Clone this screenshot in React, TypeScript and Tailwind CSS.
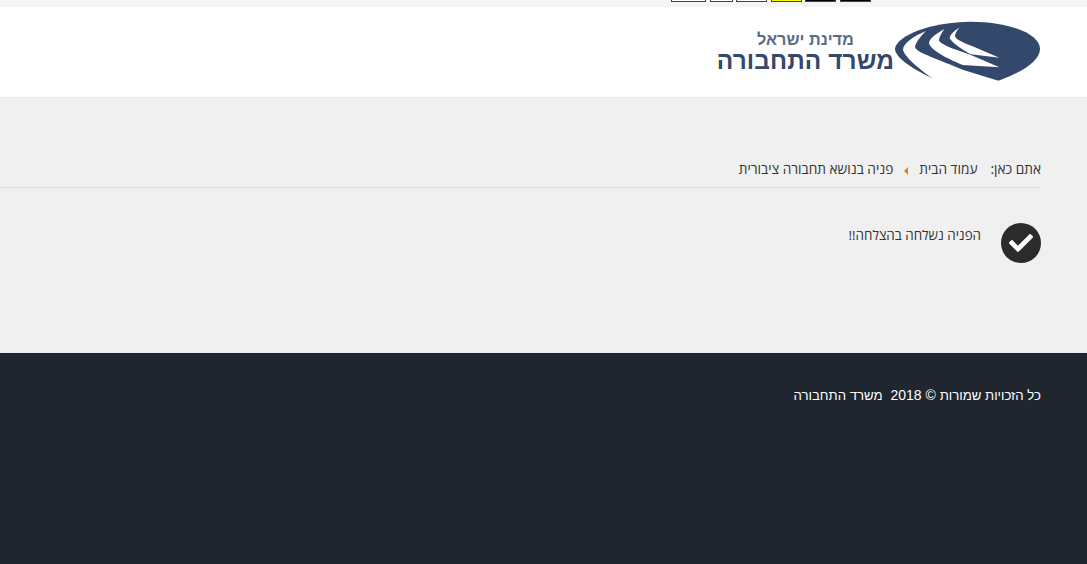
import { FaCheck } from "react-icons/fa";

const topButtons = [
  { id: "a", className: "w-[35px] bg-white" },
  { id: "b", className: "w-[23px] bg-white" },
  { id: "c", className: "w-[31px] bg-white" },
  { id: "d", className: "w-[31px] bg-[#ffff00]" },
  { id: "e", className: "w-[31px] bg-black" },
  { id: "f", className: "w-[31px] bg-black" },
];

function Logo() {
  return (
    <svg width="155" height="70" viewBox="0 0 465 210" aria-label="logo">
      <path
        d="M12 100 C18 62 120 20 240 20 C350 20 447 55 447 102 C447 140 385 175 322 197 L125 190 C80 170 10 130 12 100 Z"
        fill="#34486b"
      />
      <path
        d="M105 48 C70 62 36 85 36 104 C40 125 85 162 125 190 L125 202 L322 202 L322 197 L215 164 C150 135 72 112 72 95 C76 80 90 62 105 48 Z"
        fill="#fff"
      />
      <path
        d="M160 42 C132 58 114 72 114 85 C120 108 180 136 215 150 L325 157 L245 122 C200 106 148 90 144 76 C144 66 152 54 160 42 Z"
        fill="#fff"
      />
      <path
        d="M205 38 C188 48 176 60 176 70 C186 86 216 106 240 118 L325 128 L250 96 C225 86 196 76 192 64 C192 56 198 46 205 38 Z"
        fill="#fff"
      />
    </svg>
  );
}

export default function App() {
  return (
    <div dir="rtl" className="min-h-[564px] flex flex-col bg-[#202630] font-['Liberation_Sans',sans-serif]">
      <div dir="ltr" className="h-[7px] bg-[#f5f5f5] overflow-hidden flex justify-end gap-[3.6px] pr-[216px]">
        {topButtons.map((b) => (
          <div key={b.id} className={`h-[2px] border-x border-b border-[#444] box-border ${b.className}`}></div>
        ))}
      </div>

      <header className="h-[91px] bg-white border-b border-[#eaeaea] pr-[46px] flex items-start">
        <div className="flex items-start -mr-[5px] mt-[8px]">
          <Logo />
          <div className="mr-[-3px] pt-[16px] font-bold leading-none">
            <div className="text-[16.3px] text-[#5c6c88] text-center">מדינת ישראל</div>
            <div className="text-[24.4px] text-[#34486b] mt-[2px] tracking-[0.1px] whitespace-nowrap">משרד התחבורה</div>
          </div>
        </div>
      </header>

      <main className="h-[255px] bg-[#f0f0f0] font-['Open_Sans',sans-serif] text-[#333]">
        <div className="pt-[61px] mr-[46px] border-b border-[#dddddd] h-[90px] flex items-start text-[13.7px] leading-[20px]">
          <span className="ml-[13px]">אתם כאן:</span>
          <span>עמוד הבית</span>
          <span className="mx-[11px] mt-[8px] w-0 h-0 border-y-[4px] border-y-transparent border-r-[4px] border-r-[#e67e22]"></span>
          <span>פניה בנושא תחבורה ציבורית</span>
        </div>
        <div className="mr-[46px] mt-[35px] flex items-start gap-[20px]">
          <div className="w-10 h-10 rounded-full bg-[#2b2b2b] flex items-center justify-center text-white text-[24px]">
            <FaCheck />
          </div>
          <p className="leading-[20px] mt-[2px] text-[13.4px]">הפניה נשלחה בהצלחה!!</p>
        </div>
      </main>

      <footer className="flex-1 bg-[#202630] pr-[46px] pt-[34px] text-[14px] leading-[16px] text-white">
        <p>
          <span className="text-[13.2px]">כל הזכויות שמורות</span> © 2018 &nbsp;
          <span className="text-[13.2px]">משרד התחבורה</span>
        </p>
      </footer>
    </div>
  );
}
